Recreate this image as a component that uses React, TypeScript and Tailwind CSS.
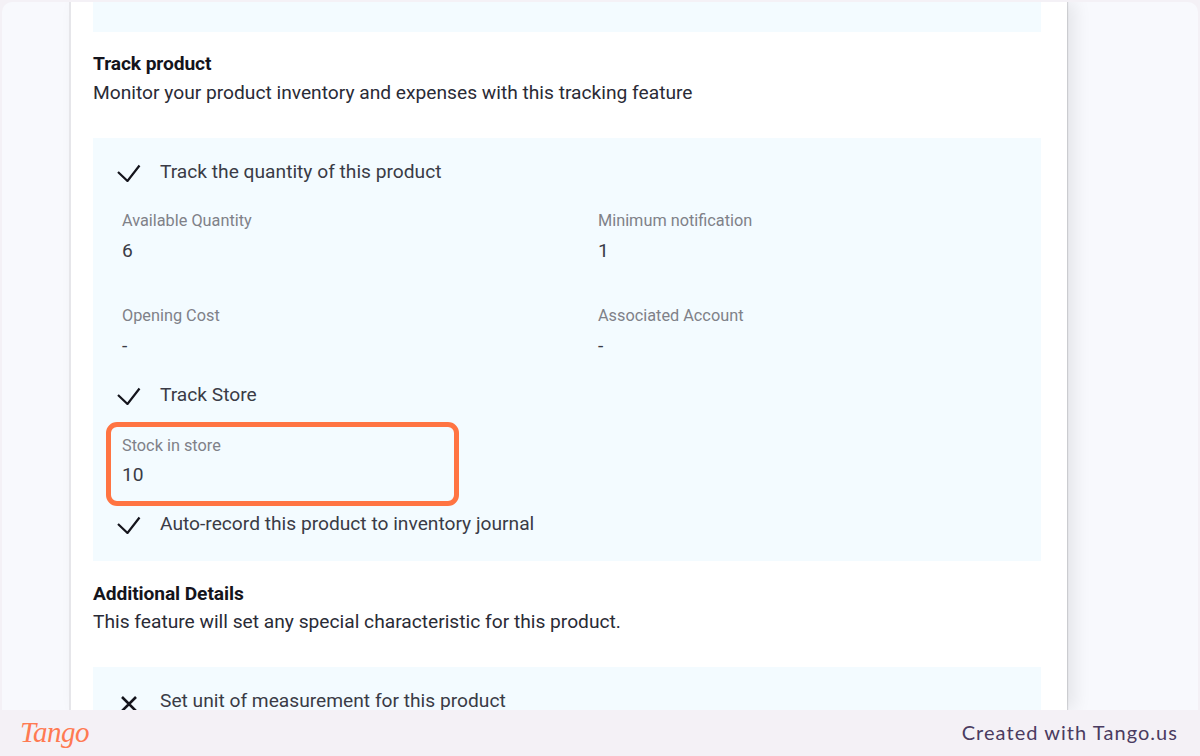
import React from 'react';

function OptionRow({ label, off, className }: { label: string; off?: boolean; className?: string }) {
  return (
    <div className={`flex items-center h-[26px] ${className ?? ''}`}>
      <div className="w-[44px] pl-[24px] shrink-0 flex items-center">
        {off ? (
          <svg viewBox="0 0 16 16" className="h-[16px] w-[16px] shrink-0 mt-[5px] ml-[4px] overflow-visible" fill="none" stroke="#14141c" strokeWidth="2.6">
            <path d="M1 1 L15 15 M15 1 L1 15" />
          </svg>
        ) : (
          <svg viewBox="0 0 24 18" className="h-[18px] w-[24px] shrink-0 mt-[2px]" fill="none" stroke="#14141c" strokeWidth="2.2">
            <path d="M1 8 L10.5 17 L22.5 1.5" />
          </svg>
        )}
      </div>
      <span className="ml-[23px] text-[19.2px] leading-[26px] text-[#3a3b46]">{label}</span>
    </div>
  );
}

function Field({ label, value, tight }: { label: string; value: string; tight?: boolean }) {
  return (
    <div>
      <div className="text-[16.3px] leading-[20px] text-[#7f8188]">{label}</div>
      <div className={`${tight ? 'mt-[8px]' : 'mt-[9px]'} text-[19.2px] leading-[22px] text-[#3a3b46]`}>{value}</div>
    </div>
  );
}

export default function App() {
  return (
    <div className="w-[1200px] h-[756px] overflow-hidden bg-[#f4f1f6] flex flex-col font-['Roboto',sans-serif]">
      {/* Page behind the card */}
      <div className="h-[708px] mx-[2px] mt-[2px] rounded-t-[10px] bg-[#f8f9fd] overflow-hidden">
        <div className="ml-[67px] w-[998px] h-full bg-white border-l-2 border-[#e6e6ea] pl-[22px] pr-[26px] shadow-[8px_0_16px_rgba(0,0,0,0.08),1px_0_1px_rgba(0,0,0,0.12)]">
          <div className="h-[30px] bg-[#f3fbff]" />

          <h2 className="mt-[21px] text-[19.2px] leading-[22px] font-bold text-[#14141c] tracking-[-0.1px]">Track product</h2>
          <p className="mt-[7px] text-[19.2px] leading-[22px] text-[#2a2b36]">
            Monitor your product inventory and expenses with this tracking feature
          </p>

          <div className="mt-[34px] h-[423px] bg-[#f3fbff] pt-[21px]">
            <OptionRow label="Track the quantity of this product" />
            <div className="mt-[26px] pl-[29px] grid grid-cols-[476px_1fr] gap-y-[44px]">
              <Field label="Available Quantity" value="6" />
              <Field label="Minimum notification" value="1" />
              <Field label="Opening Cost" value="-" />
              <Field label="Associated Account" value="-" />
            </div>
            <OptionRow label="Track Store" className="mt-[25px]" />
            <div className="relative mt-[28px] pl-[29px]">
              <Field label="Stock in store" value="10" tight />
              {/* highlight box */}
              <div className="absolute left-[13px] -top-[14px] w-[353px] h-[84px] rounded-[11px] border-[5px] border-[#ff7442]" />
            </div>
            <OptionRow label="Auto-record this product to inventory journal" className="mt-[25px]" />
          </div>

          <h2 className="mt-[22px] text-[19.2px] leading-[22px] font-bold text-[#14141c] tracking-[-0.1px]">Additional Details</h2>
          <p className="mt-[6px] text-[19.2px] leading-[22px] text-[#2a2b36]">
            This feature will set any special characteristic for this product.
          </p>

          <div className="mt-[34px] h-[60px] bg-[#f3fbff] pt-[21px]">
            <OptionRow label="Set unit of measurement for this product" off />
          </div>
        </div>
      </div>

      {/* Tango footer */}
      <div className="h-[46px] flex items-center justify-between pl-[20px] pr-[22px]">
        <span className="font-['Liberation_Serif',serif] italic text-[29px] leading-[32px] text-[#ff7a52] tracking-[-0.5px] -mt-[2px]">
          Tango
        </span>
        <span className="font-['Lato',sans-serif] text-[20px] leading-[24px] tracking-[1.05px] text-[#4a3b60] -mt-[2px]">
          Created with Tango.us
        </span>
      </div>
    </div>
  );
}
